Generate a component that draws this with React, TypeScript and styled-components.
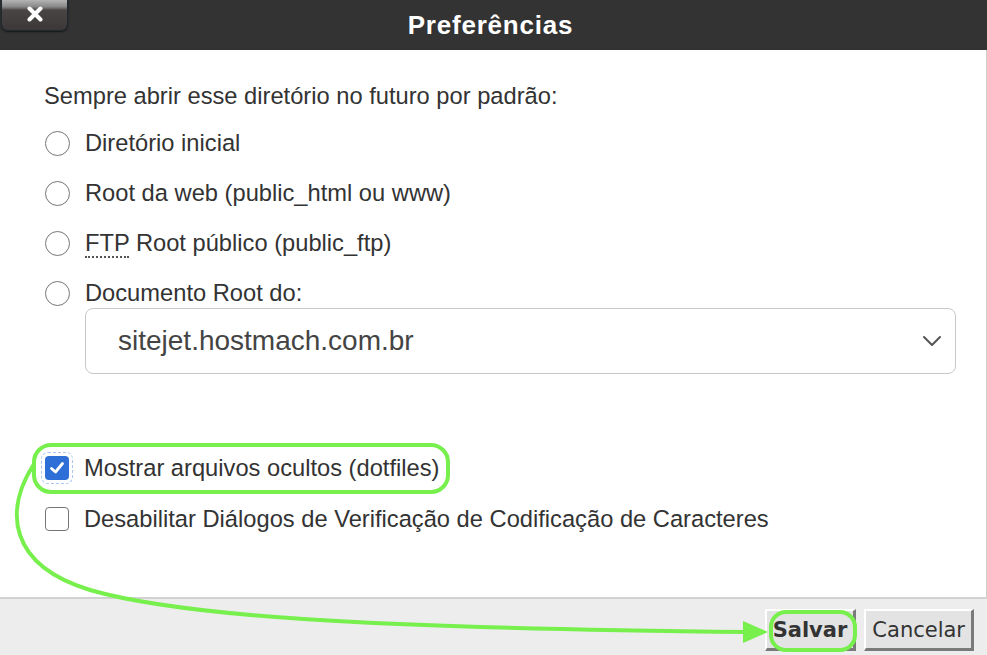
import styled, { createGlobalStyle } from "styled-components";
import { useState } from "react";

const GlobalStyle = createGlobalStyle`
  html, body {
    margin: 0;
    padding: 0;
    background: #ffffff;
  }
  body {
    font-family: "Liberation Sans", Arial, sans-serif;
    color: #333333;
  }
`;

const radioOptions = [
  { id: "home", label: "Diretório inicial" },
  { id: "web", label: "Root da web (public_html ou www)" },
  { id: "ftp", label: "Root público (public_ftp)", abbr: "FTP" },
  { id: "docroot", label: "Documento Root do:" },
];

const App = () => {
  const [dir, setDir] = useState("");
  const [dotfiles, setDotfiles] = useState(true);
  const [encoding, setEncoding] = useState(false);

  return (
    <Dialog>
      <GlobalStyle />
      <Header>
        <CloseButton aria-label="Fechar">
          <svg width="18" height="16" viewBox="0 0 18 16">
            <path
              d="M3.5 2.5 L14.5 13.5 M14.5 2.5 L3.5 13.5"
              stroke="#ffffff"
              strokeWidth="4"
              strokeLinecap="round"
            />
          </svg>
        </CloseButton>
        <Title>Preferências</Title>
      </Header>

      <Body>
        <Intro>Sempre abrir esse diretório no futuro por padrão:</Intro>
        <RadioList>
          {radioOptions.map((item) => (
            <OptionRow key={item.id} onClick={() => setDir(item.id)}>
              <Radio $checked={dir === item.id} />
              <span>
                {item.abbr && <Abbr title="File Transfer Protocol">{item.abbr}</Abbr>}
                {item.abbr ? " " : ""}
                {item.label}
              </span>
            </OptionRow>
          ))}
        </RadioList>
        <SelectBox>
          <span>sitejet.hostmach.com.br</span>
          <svg width="20" height="12" viewBox="0 0 20 12">
            <path
              d="M2 2 L10 10 L18 2"
              fill="none"
              stroke="#555"
              strokeWidth="2"
              strokeLinecap="round"
              strokeLinejoin="round"
            />
          </svg>
        </SelectBox>

        <CheckList>
          <OptionRow onClick={() => setDotfiles(!dotfiles)}>
            <Checkbox $checked={dotfiles} $focused>
              {dotfiles && (
                <svg width="16" height="14" viewBox="0 0 16 14">
                  <path
                    d="M2.5 7.5 L6.5 11 L13.5 2.5"
                    fill="none"
                    stroke="#ffffff"
                    strokeWidth="2.8"
                    strokeLinecap="round"
                    strokeLinejoin="round"
                  />
                </svg>
              )}
            </Checkbox>
            <span>Mostrar arquivos ocultos (dotfiles)</span>
          </OptionRow>
          <OptionRow onClick={() => setEncoding(!encoding)}>
            <Checkbox $checked={encoding} />
            <span>Desabilitar Diálogos de Verificação de Codificação de Caracteres</span>
          </OptionRow>
        </CheckList>
      </Body>

      <Footer>
        <FooterButton $primary>Salvar</FooterButton>
        <FooterButton>Cancelar</FooterButton>
      </Footer>

      <Annotation width="987" height="655" viewBox="0 0 987 655">
        <rect x="34" y="445" width="414" height="47" rx="17" fill="none" stroke="#77ef4c" strokeWidth="4" />
        <rect x="771" y="612" width="84" height="38" rx="15" fill="none" stroke="#77ef4c" strokeWidth="4" />
        <path
          d="M34 464 C 4 510, 8 565, 90 590 C 180 616, 360 628, 748 632"
          fill="none"
          stroke="#77ef4c"
          strokeWidth="4"
        />
        <polygon points="743,621 768,632 743,643" fill="#77ef4c" />
      </Annotation>
    </Dialog>
  );
};

export default App;

const Dialog = styled.div`
  position: relative;
  width: 987px;
  height: 655px;
  display: flex;
  flex-direction: column;
  overflow: hidden;
`;

const Header = styled.header`
  height: 50px;
  flex-shrink: 0;
  background: #333333;
  display: grid;
  grid-template-columns: 1fr auto 1fr;
  align-items: center;
`;

const CloseButton = styled.button`
  align-self: start;
  justify-self: start;
  width: 67px;
  height: 31px;
  margin-left: 1px;
  padding: 0;
  border: 1px solid #1d2a30;
  border-top: none;
  border-radius: 0 0 7px 7px;
  background: linear-gradient(
    to bottom,
    #b4b4b4 0%,
    #8a8888 22%,
    #4a4545 34%,
    #3d3838 100%
  );
  box-shadow: 0 1px 2px rgba(0, 0, 0, 0.6);
  display: flex;
  align-items: center;
  justify-content: center;
  cursor: pointer;

  svg {
    margin-top: -2px;
  }
`;

const Title = styled.h1`
  margin: 0;
  color: #ffffff;
  font-family: "Liberation Sans", Arial, sans-serif;
  font-weight: bold;
  font-size: 26px;
  letter-spacing: 0.8px;
  margin-right: 6px;
`;

const Body = styled.main`
  flex: 1;
  background: #ffffff;
  border-right: 1px solid #cfcfcf;
  padding: 34px 30px 0 44px;
  font-size: 23.7px;
  color: #333333;
`;

const Intro = styled.p`
  margin: 0;
  line-height: 24px;
`;

const RadioList = styled.div`
  display: flex;
  flex-direction: column;
  gap: 20px;
  margin-top: 20px;
`;

const OptionRow = styled.label`
  display: flex;
  align-items: center;
  gap: 15px;
  height: 30px;
  cursor: pointer;
  white-space: nowrap;
`;

const Radio = styled.span<{ $checked?: boolean }>`
  box-sizing: border-box;
  width: 25px;
  height: 25px;
  margin-left: 1px;
  border-radius: 50%;
  border: 1.6px solid #767676;
  background: ${(p) => (p.$checked ? "radial-gradient(circle, #2d6fd6 45%, #fff 48%)" : "#fff")};
  flex-shrink: 0;
`;

const Abbr = styled.abbr`
  text-decoration: none;
  border-bottom: 2px dotted #555;
`;

const SelectBox = styled.div`
  box-sizing: border-box;
  height: 66px;
  margin-left: 41px;
  border: 1.5px solid #c8c8c8;
  border-radius: 8px;
  display: flex;
  align-items: center;
  justify-content: space-between;
  padding: 0 13px 0 32px;
  font-size: 28px;
  color: #444444;
`;

const CheckList = styled.div`
  display: flex;
  flex-direction: column;
  gap: 21px;
  margin-top: 79px;
`;

const Checkbox = styled.span<{ $checked?: boolean; $focused?: boolean }>`
  position: relative;
  box-sizing: border-box;
  width: 24px;
  height: 24px;
  margin-left: 1px;
  border-radius: 4px;
  border: ${(p) => (p.$checked ? "none" : "1.6px solid #767676")};
  background: ${(p) => (p.$checked ? "#2d6fd6" : "#ffffff")};
  display: flex;
  align-items: center;
  justify-content: center;
  flex-shrink: 0;

  ${(p) =>
    p.$focused &&
    `
    &::after {
      content: "";
      position: absolute;
      inset: -4px;
      border-radius: 7px;
      border: 1.5px dashed #a9c6f3;
    }
  `}
`;

const Footer = styled.footer`
  height: 58px;
  flex-shrink: 0;
  box-sizing: border-box;
  background: #ededed;
  border-top: 2px solid #d2d2d2;
  display: flex;
  justify-content: flex-end;
  align-items: flex-start;
  gap: 8px;
  padding: 10px 13px 0 0;
`;

const FooterButton = styled.button<{ $primary?: boolean }>`
  height: 42px;
  padding: 0 6px;
  font-family: "DejaVu Sans", Verdana, sans-serif;
  font-size: 21px;
  font-weight: ${(p) => (p.$primary ? "bold" : "normal")};
  color: #333333;
  background: #e3e3e3;
  border-style: solid;
  border-width: 2px 3px 3px 2px;
  border-color: #ffffff #7a7a7a #7a7a7a #ffffff;
  cursor: pointer;
`;

const Annotation = styled.svg`
  position: absolute;
  left: 0;
  top: 0;
  pointer-events: none;
`;
